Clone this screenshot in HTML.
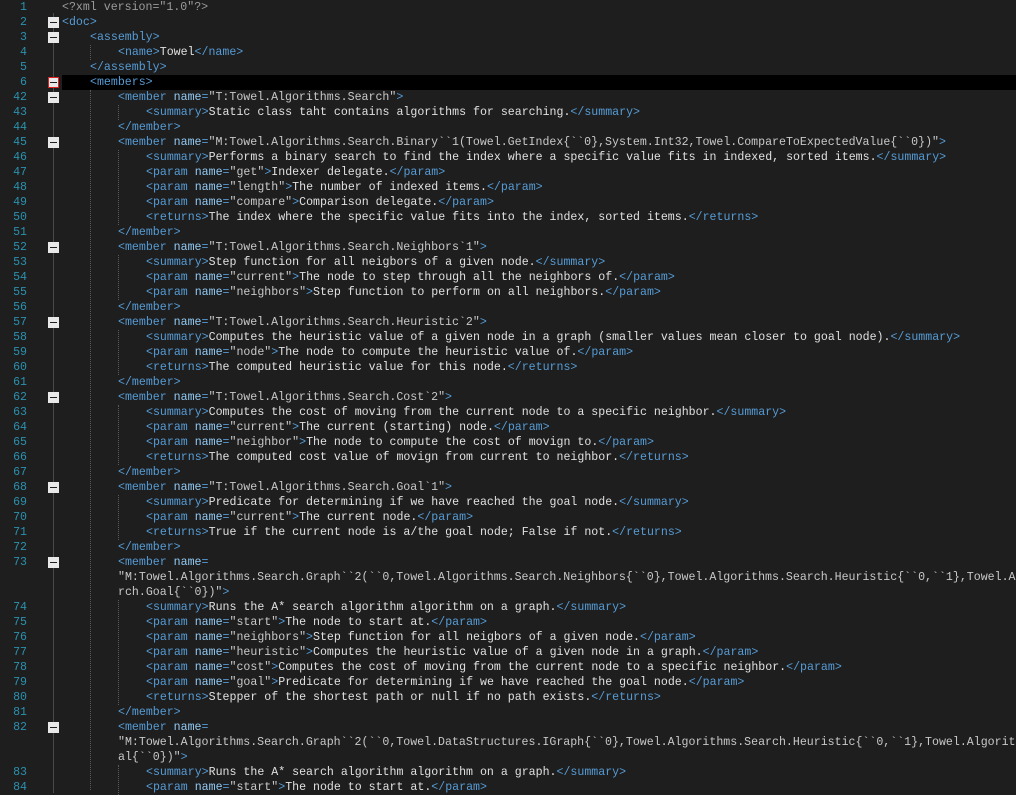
<!DOCTYPE html>
<html><head><meta charset="utf-8"><style>
body{margin:0;background:#1e1e1e;width:1016px;height:788px;overflow:hidden;position:relative;font-family:"Liberation Mono","DejaVu Sans Mono",monospace;font-size:11.6px;}
.r{position:absolute;left:0;height:15px;line-height:15px;width:1016px;white-space:pre;}
.n{position:absolute;left:0;width:27px;text-align:right;color:#2b91af;}
.c{position:absolute;top:0;color:#e0e0e0;}
.t{color:#569cd6}.a{color:#92caf4}.v{color:#c8c8c8}.p{color:#9b9b9b}
.f{position:absolute;left:48px;top:2px;width:11px;height:11px;background:#e8e8e8;box-sizing:border-box;border:1px solid #e8e8e8}
.f:after{content:"";position:absolute;left:1px;top:4px;width:7px;height:1px;background:#1e1e1e}
.fr{border-color:#e02020}
.vl{position:absolute;left:53px;top:13px;width:1px;height:780px;background:#4a4a4a}
.g{position:absolute;width:0;border-left:1px dotted #5a5a5a}
.hl{position:absolute;left:62px;top:75px;width:954px;height:15px;background:#000}
</style></head><body>
<div class="vl"></div>
<div class="hl"></div>
<div class="g" style="left:90px;top:45px;height:15px"></div>
<div class="g" style="left:90px;top:90px;height:700px"></div>
<div class="g" style="left:118px;top:105px;height:15px"></div>
<div class="g" style="left:118px;top:150px;height:75px"></div>
<div class="g" style="left:118px;top:255px;height:45px"></div>
<div class="g" style="left:118px;top:330px;height:45px"></div>
<div class="g" style="left:118px;top:405px;height:60px"></div>
<div class="g" style="left:118px;top:495px;height:45px"></div>
<div class="g" style="left:118px;top:600px;height:105px"></div>
<div class="g" style="left:118px;top:765px;height:30px"></div>

<div class="r" style="top:0"><span class="n">1</span><span class="c p" style="left:62px">&lt;?xml version="1.0"?&gt;</span></div>
<div class="r" style="top:15px"><span class="n">2</span><span class="f"></span><span class="c" style="left:62px"><span class="t">&lt;doc&gt;</span></span></div>
<div class="r" style="top:30px"><span class="n">3</span><span class="f"></span><span class="c" style="left:90px"><span class="t">&lt;assembly&gt;</span></span></div>
<div class="r" style="top:45px"><span class="n">4</span><span class="c" style="left:118px"><span class="t">&lt;name&gt;</span>Towel<span class="t">&lt;/name&gt;</span></span></div>
<div class="r" style="top:60px"><span class="n">5</span><span class="c" style="left:90px"><span class="t">&lt;/assembly&gt;</span></span></div>
<div class="r" style="top:75px"><span class="n">6</span><span class="f fr"></span><span class="c" style="left:90px"><span class="t">&lt;members&gt;</span></span></div>
<div class="r" style="top:90px"><span class="n">42</span><span class="f"></span><span class="c" style="left:118px"><span class="t">&lt;member </span><span class="a">name</span><span class="t">=</span><span class="v">"T:Towel.Algorithms.Search"</span><span class="t">&gt;</span></span></div>
<div class="r" style="top:105px"><span class="n">43</span><span class="c" style="left:146px"><span class="t">&lt;summary&gt;</span>Static class taht contains algorithms for searching.<span class="t">&lt;/summary&gt;</span></span></div>
<div class="r" style="top:120px"><span class="n">44</span><span class="c" style="left:118px"><span class="t">&lt;/member&gt;</span></span></div>
<div class="r" style="top:135px"><span class="n">45</span><span class="f"></span><span class="c" style="left:118px"><span class="t">&lt;member </span><span class="a">name</span><span class="t">=</span><span class="v">"M:Towel.Algorithms.Search.Binary``1(Towel.GetIndex{``0},System.Int32,Towel.CompareToExpectedValue{``0})"</span><span class="t">&gt;</span></span></div>
<div class="r" style="top:150px"><span class="n">46</span><span class="c" style="left:146px"><span class="t">&lt;summary&gt;</span>Performs a binary search to find the index where a specific value fits in indexed, sorted items.<span class="t">&lt;/summary&gt;</span></span></div>
<div class="r" style="top:165px"><span class="n">47</span><span class="c" style="left:146px"><span class="t">&lt;param </span><span class="a">name</span><span class="t">=</span><span class="v">"get"</span><span class="t">&gt;</span>Indexer delegate.<span class="t">&lt;/param&gt;</span></span></div>
<div class="r" style="top:180px"><span class="n">48</span><span class="c" style="left:146px"><span class="t">&lt;param </span><span class="a">name</span><span class="t">=</span><span class="v">"length"</span><span class="t">&gt;</span>The number of indexed items.<span class="t">&lt;/param&gt;</span></span></div>
<div class="r" style="top:195px"><span class="n">49</span><span class="c" style="left:146px"><span class="t">&lt;param </span><span class="a">name</span><span class="t">=</span><span class="v">"compare"</span><span class="t">&gt;</span>Comparison delegate.<span class="t">&lt;/param&gt;</span></span></div>
<div class="r" style="top:210px"><span class="n">50</span><span class="c" style="left:146px"><span class="t">&lt;returns&gt;</span>The index where the specific value fits into the index, sorted items.<span class="t">&lt;/returns&gt;</span></span></div>
<div class="r" style="top:225px"><span class="n">51</span><span class="c" style="left:118px"><span class="t">&lt;/member&gt;</span></span></div>
<div class="r" style="top:240px"><span class="n">52</span><span class="f"></span><span class="c" style="left:118px"><span class="t">&lt;member </span><span class="a">name</span><span class="t">=</span><span class="v">"T:Towel.Algorithms.Search.Neighbors`1"</span><span class="t">&gt;</span></span></div>
<div class="r" style="top:255px"><span class="n">53</span><span class="c" style="left:146px"><span class="t">&lt;summary&gt;</span>Step function for all neigbors of a given node.<span class="t">&lt;/summary&gt;</span></span></div>
<div class="r" style="top:270px"><span class="n">54</span><span class="c" style="left:146px"><span class="t">&lt;param </span><span class="a">name</span><span class="t">=</span><span class="v">"current"</span><span class="t">&gt;</span>The node to step through all the neighbors of.<span class="t">&lt;/param&gt;</span></span></div>
<div class="r" style="top:285px"><span class="n">55</span><span class="c" style="left:146px"><span class="t">&lt;param </span><span class="a">name</span><span class="t">=</span><span class="v">"neighbors"</span><span class="t">&gt;</span>Step function to perform on all neighbors.<span class="t">&lt;/param&gt;</span></span></div>
<div class="r" style="top:300px"><span class="n">56</span><span class="c" style="left:118px"><span class="t">&lt;/member&gt;</span></span></div>
<div class="r" style="top:315px"><span class="n">57</span><span class="f"></span><span class="c" style="left:118px"><span class="t">&lt;member </span><span class="a">name</span><span class="t">=</span><span class="v">"T:Towel.Algorithms.Search.Heuristic`2"</span><span class="t">&gt;</span></span></div>
<div class="r" style="top:330px"><span class="n">58</span><span class="c" style="left:146px"><span class="t">&lt;summary&gt;</span>Computes the heuristic value of a given node in a graph (smaller values mean closer to goal node).<span class="t">&lt;/summary&gt;</span></span></div>
<div class="r" style="top:345px"><span class="n">59</span><span class="c" style="left:146px"><span class="t">&lt;param </span><span class="a">name</span><span class="t">=</span><span class="v">"node"</span><span class="t">&gt;</span>The node to compute the heuristic value of.<span class="t">&lt;/param&gt;</span></span></div>
<div class="r" style="top:360px"><span class="n">60</span><span class="c" style="left:146px"><span class="t">&lt;returns&gt;</span>The computed heuristic value for this node.<span class="t">&lt;/returns&gt;</span></span></div>
<div class="r" style="top:375px"><span class="n">61</span><span class="c" style="left:118px"><span class="t">&lt;/member&gt;</span></span></div>
<div class="r" style="top:390px"><span class="n">62</span><span class="f"></span><span class="c" style="left:118px"><span class="t">&lt;member </span><span class="a">name</span><span class="t">=</span><span class="v">"T:Towel.Algorithms.Search.Cost`2"</span><span class="t">&gt;</span></span></div>
<div class="r" style="top:405px"><span class="n">63</span><span class="c" style="left:146px"><span class="t">&lt;summary&gt;</span>Computes the cost of moving from the current node to a specific neighbor.<span class="t">&lt;/summary&gt;</span></span></div>
<div class="r" style="top:420px"><span class="n">64</span><span class="c" style="left:146px"><span class="t">&lt;param </span><span class="a">name</span><span class="t">=</span><span class="v">"current"</span><span class="t">&gt;</span>The current (starting) node.<span class="t">&lt;/param&gt;</span></span></div>
<div class="r" style="top:435px"><span class="n">65</span><span class="c" style="left:146px"><span class="t">&lt;param </span><span class="a">name</span><span class="t">=</span><span class="v">"neighbor"</span><span class="t">&gt;</span>The node to compute the cost of movign to.<span class="t">&lt;/param&gt;</span></span></div>
<div class="r" style="top:450px"><span class="n">66</span><span class="c" style="left:146px"><span class="t">&lt;returns&gt;</span>The computed cost value of movign from current to neighbor.<span class="t">&lt;/returns&gt;</span></span></div>
<div class="r" style="top:465px"><span class="n">67</span><span class="c" style="left:118px"><span class="t">&lt;/member&gt;</span></span></div>
<div class="r" style="top:480px"><span class="n">68</span><span class="f"></span><span class="c" style="left:118px"><span class="t">&lt;member </span><span class="a">name</span><span class="t">=</span><span class="v">"T:Towel.Algorithms.Search.Goal`1"</span><span class="t">&gt;</span></span></div>
<div class="r" style="top:495px"><span class="n">69</span><span class="c" style="left:146px"><span class="t">&lt;summary&gt;</span>Predicate for determining if we have reached the goal node.<span class="t">&lt;/summary&gt;</span></span></div>
<div class="r" style="top:510px"><span class="n">70</span><span class="c" style="left:146px"><span class="t">&lt;param </span><span class="a">name</span><span class="t">=</span><span class="v">"current"</span><span class="t">&gt;</span>The current node.<span class="t">&lt;/param&gt;</span></span></div>
<div class="r" style="top:525px"><span class="n">71</span><span class="c" style="left:146px"><span class="t">&lt;returns&gt;</span>True if the current node is a/the goal node; False if not.<span class="t">&lt;/returns&gt;</span></span></div>
<div class="r" style="top:540px"><span class="n">72</span><span class="c" style="left:118px"><span class="t">&lt;/member&gt;</span></span></div>
<div class="r" style="top:555px"><span class="n">73</span><span class="f"></span><span class="c" style="left:118px"><span class="t">&lt;member </span><span class="a">name</span><span class="t">=</span></span></div>
<div class="r" style="top:570px"><span class="c v" style="left:118px">"M:Towel.Algorithms.Search.Graph``2(``0,Towel.Algorithms.Search.Neighbors{``0},Towel.Algorithms.Search.Heuristic{``0,``1},Towel.A</span></div>
<div class="r" style="top:585px"><span class="c" style="left:118px"><span class="v">rch.Goal{``0})"</span><span class="t">&gt;</span></span></div>
<div class="r" style="top:600px"><span class="n">74</span><span class="c" style="left:146px"><span class="t">&lt;summary&gt;</span>Runs the A* search algorithm algorithm on a graph.<span class="t">&lt;/summary&gt;</span></span></div>
<div class="r" style="top:615px"><span class="n">75</span><span class="c" style="left:146px"><span class="t">&lt;param </span><span class="a">name</span><span class="t">=</span><span class="v">"start"</span><span class="t">&gt;</span>The node to start at.<span class="t">&lt;/param&gt;</span></span></div>
<div class="r" style="top:630px"><span class="n">76</span><span class="c" style="left:146px"><span class="t">&lt;param </span><span class="a">name</span><span class="t">=</span><span class="v">"neighbors"</span><span class="t">&gt;</span>Step function for all neigbors of a given node.<span class="t">&lt;/param&gt;</span></span></div>
<div class="r" style="top:645px"><span class="n">77</span><span class="c" style="left:146px"><span class="t">&lt;param </span><span class="a">name</span><span class="t">=</span><span class="v">"heuristic"</span><span class="t">&gt;</span>Computes the heuristic value of a given node in a graph.<span class="t">&lt;/param&gt;</span></span></div>
<div class="r" style="top:660px"><span class="n">78</span><span class="c" style="left:146px"><span class="t">&lt;param </span><span class="a">name</span><span class="t">=</span><span class="v">"cost"</span><span class="t">&gt;</span>Computes the cost of moving from the current node to a specific neighbor.<span class="t">&lt;/param&gt;</span></span></div>
<div class="r" style="top:675px"><span class="n">79</span><span class="c" style="left:146px"><span class="t">&lt;param </span><span class="a">name</span><span class="t">=</span><span class="v">"goal"</span><span class="t">&gt;</span>Predicate for determining if we have reached the goal node.<span class="t">&lt;/param&gt;</span></span></div>
<div class="r" style="top:690px"><span class="n">80</span><span class="c" style="left:146px"><span class="t">&lt;returns&gt;</span>Stepper of the shortest path or null if no path exists.<span class="t">&lt;/returns&gt;</span></span></div>
<div class="r" style="top:705px"><span class="n">81</span><span class="c" style="left:118px"><span class="t">&lt;/member&gt;</span></span></div>
<div class="r" style="top:720px"><span class="n">82</span><span class="f"></span><span class="c" style="left:118px"><span class="t">&lt;member </span><span class="a">name</span><span class="t">=</span></span></div>
<div class="r" style="top:735px"><span class="c v" style="left:118px">"M:Towel.Algorithms.Search.Graph``2(``0,Towel.DataStructures.IGraph{``0},Towel.Algorithms.Search.Heuristic{``0,``1},Towel.Algorit</span></div>
<div class="r" style="top:750px"><span class="c" style="left:118px"><span class="v">al{``0})"</span><span class="t">&gt;</span></span></div>
<div class="r" style="top:765px"><span class="n">83</span><span class="c" style="left:146px"><span class="t">&lt;summary&gt;</span>Runs the A* search algorithm algorithm on a graph.<span class="t">&lt;/summary&gt;</span></span></div>
<div class="r" style="top:780px"><span class="n">84</span><span class="c" style="left:146px"><span class="t">&lt;param </span><span class="a">name</span><span class="t">=</span><span class="v">"start"</span><span class="t">&gt;</span>The node to start at.<span class="t">&lt;/param&gt;</span></span></div>
</body></html>
